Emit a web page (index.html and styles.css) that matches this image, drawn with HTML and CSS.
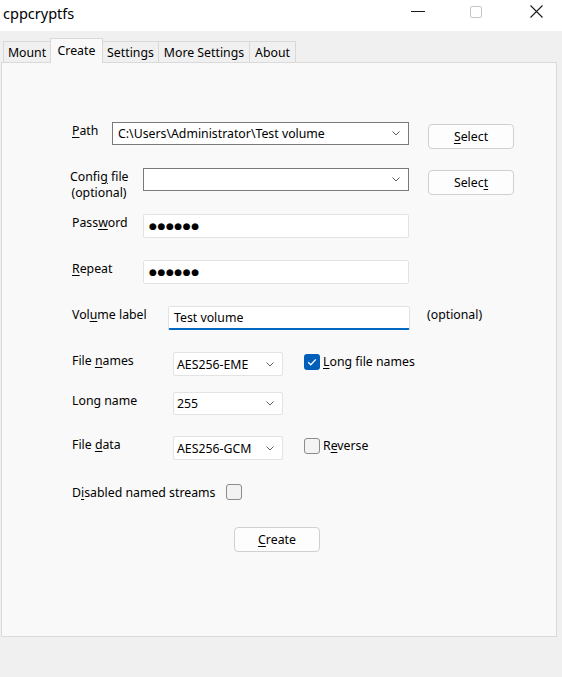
FILE: index.html
```html
<!DOCTYPE html>
<html>
<head>
<meta charset="utf-8">
<title>cppcryptfs</title>
<link rel="stylesheet" href="styles.css">
</head>
<body>
<div class="titlebar">
  <span class="title">cppcryptfs</span>
  <div class="winbtns">
    <svg class="wb wb-min" width="14" height="13" viewBox="0 0 14 13"><path d="M0 6.5 H14" stroke="#1a1a1a" stroke-width="1"/></svg>
    <svg class="wb wb-max" width="12" height="13" viewBox="0 0 12 13"><rect x="0.5" y="1.5" width="11" height="11" rx="1.5" fill="none" stroke="#c4c4c4" stroke-width="1"/></svg>
    <svg class="wb wb-close" width="13" height="13" viewBox="0 0 13 13"><path d="M0.5 0.5 L12.5 12.5 M12.5 0.5 L0.5 12.5" stroke="#1a1a1a" stroke-width="1.1"/></svg>
  </div>
</div>
<div class="tabs">
  <div class="tab t-mount">Mount</div>
  <div class="tab t-create active">Create</div>
  <div class="tab t-settings">Settings</div>
  <div class="tab t-more">More Settings</div>
  <div class="tab t-about">About</div>
</div>
<div class="panel">
  <div class="row row-first">
    <div class="lbl w40"><u>P</u>ath</div>
    <div class="combo dark cw-path"><span class="ctext">C:\Users\Administrator\Test volume</span><svg class="chev" width="8" height="5" viewBox="0 0 8 5"><path d="M0.5 0.5 L4 4 L7.5 0.5" fill="none" stroke="#606060" stroke-width="1"/></svg></div>
    <button class="btn sel"><u>S</u>elect</button>
  </div>
  <div class="row">
    <div class="lbl lbl-config">Confi<u>g</u> file<br>(optional)</div>
    <div class="combo dark cw-config"><span class="ctext"></span><svg class="chev" width="8" height="5" viewBox="0 0 8 5"><path d="M0.5 0.5 L4 4 L7.5 0.5" fill="none" stroke="#606060" stroke-width="1"/></svg></div>
    <button class="btn sel">Selec<u>t</u></button>
  </div>
  <div class="row">
    <div class="lbl w71">Pass<u>w</u>ord</div>
    <div class="edit ew-pass"><span class="dots">●●●●●●</span></div>
  </div>
  <div class="row">
    <div class="lbl w71"><u>R</u>epeat</div>
    <div class="edit ew-pass"><span class="dots">●●●●●●</span></div>
  </div>
  <div class="row">
    <div class="lbl w96">Vol<u>u</u>me label</div>
    <div class="edit focus ew-vol"><span class="etext">Test volume</span></div>
    <div class="lbl opt">(optional)</div>
  </div>
  <div class="row">
    <div class="lbl w101">File <u>n</u>ames</div>
    <div class="combo light cw-small"><span class="ctext small">AES256-EME</span><svg class="chev" width="8" height="5" viewBox="0 0 8 5"><path d="M0.5 0.5 L4 4 L7.5 0.5" fill="none" stroke="#606060" stroke-width="1"/></svg></div>
    <span class="check on"><svg width="16" height="16" viewBox="0 0 16 16"><path d="M4.2 8.3 L6.8 10.8 L11.8 5.4" fill="none" stroke="#fff" stroke-width="1.3"/></svg></span>
    <div class="lbl cklbl"><u>L</u>ong file names</div>
  </div>
  <div class="row row-long">
    <div class="lbl w101">Long name</div>
    <div class="combo light cw-small h23"><span class="ctext small">255</span><svg class="chev" width="8" height="5" viewBox="0 0 8 5"><path d="M0.5 0.5 L4 4 L7.5 0.5" fill="none" stroke="#606060" stroke-width="1"/></svg></div>
  </div>
  <div class="row row-data">
    <div class="lbl w101">File <u>d</u>ata</div>
    <div class="combo light cw-small"><span class="ctext small">AES256-GCM</span><svg class="chev" width="8" height="5" viewBox="0 0 8 5"><path d="M0.5 0.5 L4 4 L7.5 0.5" fill="none" stroke="#606060" stroke-width="1"/></svg></div>
    <span class="check"></span>
    <div class="lbl cklbl">R<u>e</u>verse</div>
  </div>
  <div class="row row-streams">
    <div class="lbl w154">D<u>i</u>sabled named streams</div>
    <span class="check check-streams"></span>
  </div>
  <div class="row row-create">
    <button class="btn create"><u>C</u>reate</button>
  </div>
</div>
</body>
</html>
```

FILE: styles.css
```css
* { box-sizing: border-box; }
html, body { margin: 0; padding: 0; }
body {
  width: 562px;
  height: 677px;
  overflow: hidden;
  background: #f0f0f0;
  font-family: "Noto Sans", "Open Sans", sans-serif;
  font-size: 12.3px;
  color: #000;
}
u { text-decoration: underline; text-underline-offset: 2px; text-decoration-thickness: 1px; }

/* title bar */
.titlebar {
  height: 31px;
  background: #fff;
  display: flex;
  align-items: flex-start;
}
.title {
  margin-top: 3px;
  padding-left: 3px;
  font-size: 14.5px;
  line-height: 20px;
  color: #000;
}
.winbtns {
  margin-left: auto;
  padding-right: 19px;
  display: flex;
  align-items: flex-start;
}
.wb { display: block; margin-top: 5px; }
.wb-max { margin-left: 45px; }
.wb-close { margin-left: 48px; }

/* tabs */
.tabs {
  display: flex;
  align-items: flex-end;
  height: 24px;
  margin-top: 7px;
  padding-left: 3px;
}
.tab {
  height: 21px;
  border: 1px solid #d9d9d9;
  border-bottom: none;
  background: #f0f0f0;
  line-height: 20px;
  padding-top: 1px;
  text-align: center;
  margin-right: -1px;
  color: #000;
  white-space: nowrap;
}
.tab.active {
  height: 25px;
  margin-bottom: -1px;
  background: #f9f9f9;
  line-height: 20px;
  padding-top: 2px;
  position: relative;
  z-index: 1;
}
.t-mount { width: 48px; }
.t-create { width: 53px; }
.t-settings { width: 57px; }
.t-more { width: 92px; }
.t-about { width: 47px; }

/* panel */
.panel {
  margin-left: 1px;
  width: 556px;
  height: 575px;
  border: 1px solid #dadada;
  background: #f9f9f9;
  padding-left: 70px;
  padding-top: 59px;
}
.row {
  display: flex;
  align-items: flex-start;
  height: 24px;
  margin-top: 22px;
}
.row-first { margin-top: 0; }
.row-long { margin-top: 16px; }
.row-data { margin-top: 20px; }
.row-streams { margin-top: 24px; }
.row-create { margin-top: 19px; }

.lbl {
  line-height: 16px;
  padding-top: 1px;
  white-space: nowrap;
  flex: none;
}
.w40 { width: 40px; }
.w71 { width: 71px; }
.w96 { width: 96px; }
.w101 { width: 101px; }
.w154 { width: 154px; }
.lbl-config {
  width: 58px;
  margin-left: -2px;
  margin-right: 15px;
  text-align: center;
}
.opt { margin-left: 17px; }
.cklbl { margin-left: 3px; margin-top: 1px; }

/* combos */
.combo {
  flex: none;
  display: flex;
  align-items: center;
  height: 23px;
  background: #fff;
}
.combo.dark { border: 1px solid #7a7a7a; }
.combo.light { border: 1px solid #e3e3e3; height: 24px; border-radius: 2px; }
.combo.light.h23 { height: 23px; }
.cw-path { width: 297px; }
.cw-config { width: 266px; }
.cw-small { width: 110px; }
.ctext {
  flex: 1;
  padding-left: 5px;
  line-height: 21px;
  white-space: nowrap;
  overflow: hidden;
}
.ctext.small { padding-left: 3px; }
.chev { flex: none; margin-right: 8px; display: block; }

/* edits */
.edit {
  flex: none;
  height: 24px;
  background: #fff;
  border: 1px solid #e3e3e3;
  border-radius: 2px;
  display: flex;
  align-items: center;
  padding-left: 5px;
}
.ew-pass { width: 266px; }
.ew-vol { width: 242px; height: 24px; }
.edit.focus { border-bottom: 2px solid #0067c0; }
.etext { line-height: 20px; }
.dots {
  font-family: "DejaVu Sans", sans-serif;
  font-size: 9px;
  letter-spacing: 0.6px;
  line-height: 20px;
  color: #000;
}

/* buttons */
.btn {
  flex: none;
  width: 86px;
  height: 25px;
  background: #fdfdfd;
  border: 1px solid #d0d0d0;
  border-radius: 4px;
  font-family: "Noto Sans", "Open Sans", sans-serif;
  font-size: 12.3px;
  color: #000;
  padding: 0;
  line-height: 21px;
}
.sel { margin-left: 19px; margin-top: 2px; }
.create { margin-left: 162px; }

/* checkboxes */
.check {
  flex: none;
  display: block;
  width: 16px;
  height: 16px;
  margin-left: 21px;
  margin-top: 2px;
  border: 1px solid #8b8b8b;
  border-radius: 3px;
  background: #f3f3f3;
}
.check.on {
  border: none;
  background: #005fb8;
}
.check.on svg { display: block; }
.check-streams { margin-left: 0; margin-top: 0; }
```
